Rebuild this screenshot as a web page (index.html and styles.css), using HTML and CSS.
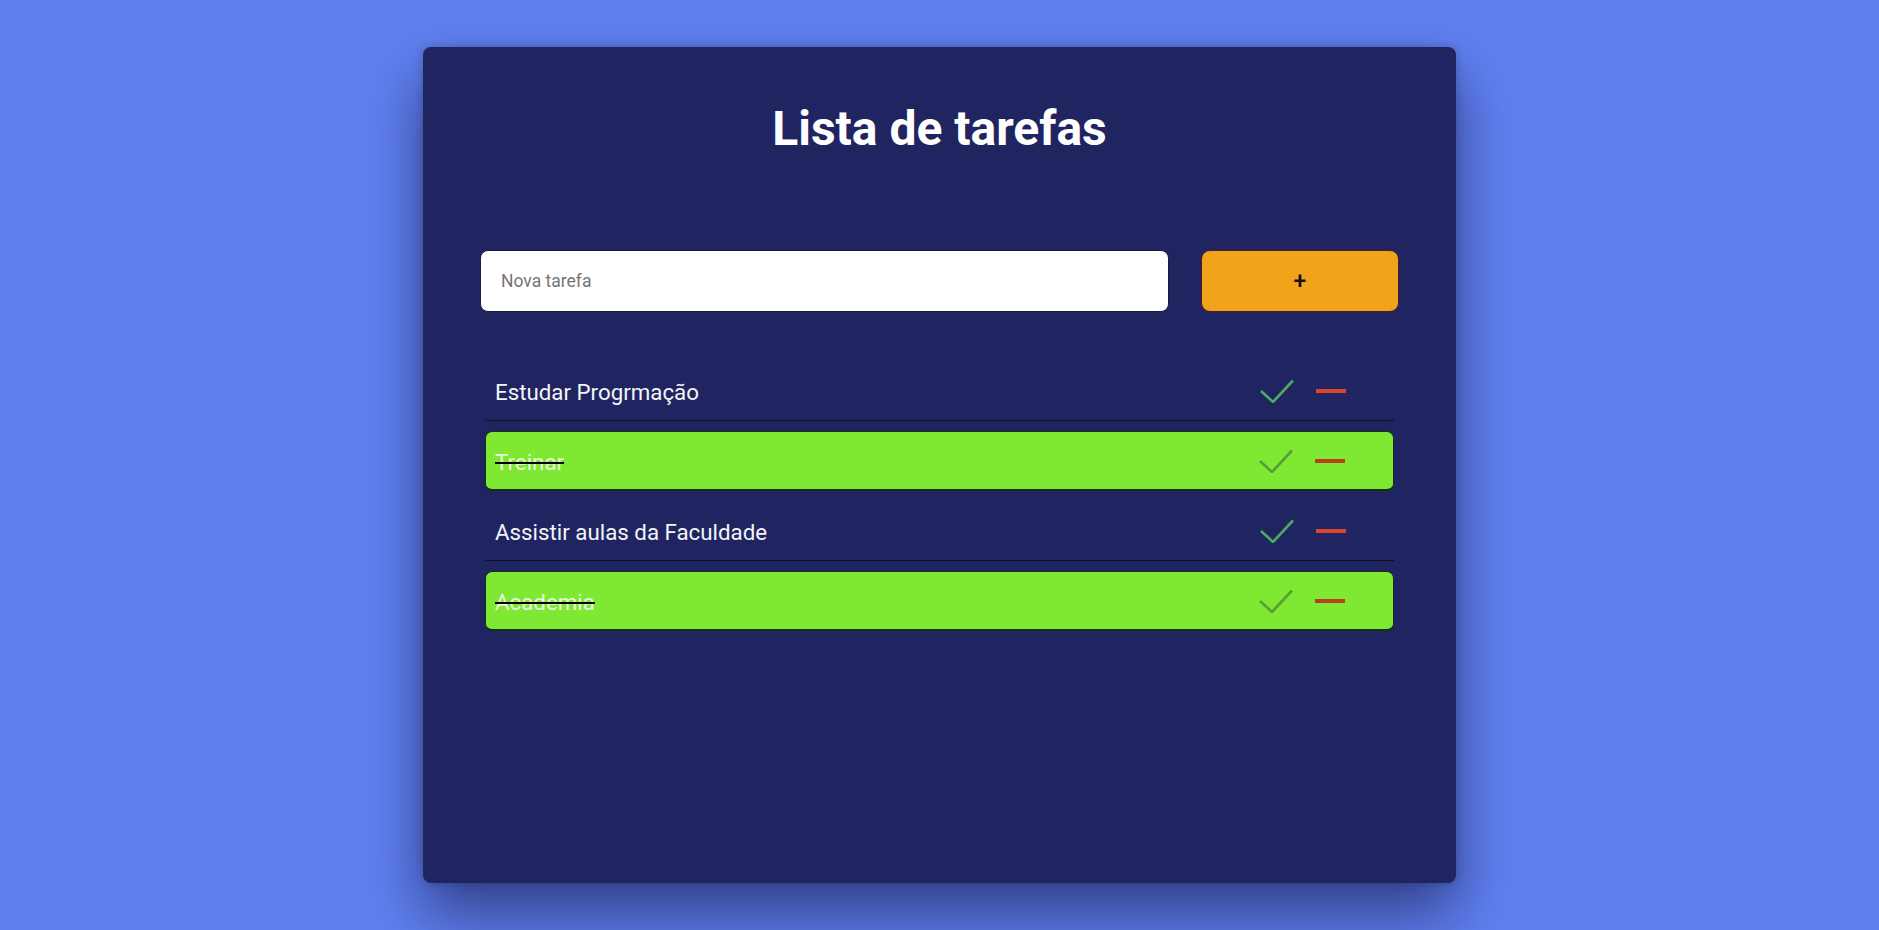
FILE: index.html
```html
<!DOCTYPE html>
<html lang="pt-BR">
<head>
<meta charset="utf-8">
<title>Lista de tarefas</title>
<link rel="stylesheet" href="styles.css">
</head>
<body>
<main class="card">
  <h1 class="title">Lista de tarefas</h1>
  <form class="new-task">
    <input class="task-input" type="text" placeholder="Nova tarefa">
    <button class="add-btn" type="button">+</button>
  </form>
  <ul class="task-list">
    <li class="task">
      <span class="task-text">Estudar Progrmação</span>
      <div class="task-actions">
        <button class="icon-btn check" type="button"><svg width="34" height="24" viewBox="0 0 34 24"><polyline points="1,12 13,23 33,1.5" fill="none" stroke="currentColor" stroke-width="2.6"/></svg></button>
        <button class="icon-btn minus" type="button"><svg width="30" height="4" viewBox="0 0 30 4"><rect x="0" y="0" width="30" height="4" fill="currentColor"/></svg></button>
      </div>
    </li>
    <li class="task done">
      <span class="task-text">Treinar</span>
      <div class="task-actions">
        <button class="icon-btn check" type="button"><svg width="34" height="24" viewBox="0 0 34 24"><polyline points="1,12 13,23 33,1.5" fill="none" stroke="currentColor" stroke-width="2.6"/></svg></button>
        <button class="icon-btn minus" type="button"><svg width="30" height="4" viewBox="0 0 30 4"><rect x="0" y="0" width="30" height="4" fill="currentColor"/></svg></button>
      </div>
    </li>
    <li class="task">
      <span class="task-text">Assistir aulas da Faculdade</span>
      <div class="task-actions">
        <button class="icon-btn check" type="button"><svg width="34" height="24" viewBox="0 0 34 24"><polyline points="1,12 13,23 33,1.5" fill="none" stroke="currentColor" stroke-width="2.6"/></svg></button>
        <button class="icon-btn minus" type="button"><svg width="30" height="4" viewBox="0 0 30 4"><rect x="0" y="0" width="30" height="4" fill="currentColor"/></svg></button>
      </div>
    </li>
    <li class="task done">
      <span class="task-text">Academia</span>
      <div class="task-actions">
        <button class="icon-btn check" type="button"><svg width="34" height="24" viewBox="0 0 34 24"><polyline points="1,12 13,23 33,1.5" fill="none" stroke="currentColor" stroke-width="2.6"/></svg></button>
        <button class="icon-btn minus" type="button"><svg width="30" height="4" viewBox="0 0 30 4"><rect x="0" y="0" width="30" height="4" fill="currentColor"/></svg></button>
      </div>
    </li>
  </ul>
</main>
</body>
</html>
```
FILE: styles.css
```css
* { box-sizing: border-box; }

html, body {
  margin: 0;
  padding: 0;
}

body {
  background: #6080f0;
  font-family: Roboto, "Noto Sans", Arial, sans-serif;
  height: 930px;
  overflow: hidden;
  padding-top: 47px;
}

.card {
  width: 1033px;
  height: 836px;
  margin: 0 auto;
  background: #202562;
  border-radius: 8px;
  box-shadow: 0 30px 60px rgba(10, 10, 50, 0.55), 0 0 8px rgba(0, 0, 0, 0.2);
  padding: 54px 58px 0;
  display: flex;
  flex-direction: column;
}

.title {
  margin: 0;
  text-align: center;
  color: #ffffff;
  font-size: 48px;
  font-weight: 700;
  line-height: 56px;
}

.new-task {
  margin: 93px -1px 0;
  display: flex;
  gap: 32px;
  height: 62px;
}

.task-input {
  flex: 1;
  height: 62px;
  border: 1px solid #1a1a40;
  border-radius: 8px;
  background: #ffffff;
  padding: 0 20px;
  font-family: Roboto, "Noto Sans", Arial, sans-serif;
  font-size: 17.5px;
  color: #333;
  outline: none;
}

.task-input::placeholder {
  color: #757575;
}

.add-btn {
  width: 198px;
  height: 62px;
  background: #f1a31b;
  border: 1px solid #4a1c30;
  border-radius: 9px;
  font-family: Roboto, "Noto Sans", Arial, sans-serif;
  font-size: 23px;
  font-weight: 500;
  color: #111;
  padding: 0;
}

.task-list {
  list-style: none;
  margin: 49px 4px 0;
  padding: 0;
  display: flex;
  flex-direction: column;
  gap: 10px;
}

.task {
  height: 60px;
  display: flex;
  align-items: center;
  padding: 0 48px 0 10px;
  border-bottom: 1.5px solid #0d0f2a;
  color: #f4f4f8;
}

.task.done {
  background: #7ee832;
  border: 1px solid #14301a;
  border-bottom-width: 2px;
  border-radius: 7px;
  padding-left: 9px;
}

.task-text {
  flex: 1;
  font-size: 22.3px;
  line-height: 26px;
  padding-top: 2px;
}

.task.done .task-text {
  color: rgba(255, 255, 255, 0.85);
  text-decoration: line-through;
  text-decoration-color: #000;
  text-decoration-thickness: 2px;
}

.task-actions {
  display: flex;
  align-items: center;
  gap: 22px;
}

.icon-btn {
  background: none;
  border: none;
  padding: 0;
  display: flex;
  align-items: center;
}

.icon-btn.check { color: #4caa5c; }
.icon-btn.minus { color: #d8452a; }

.task.done .icon-btn.check { color: #5a9c3c; }
.task.done .icon-btn.minus { color: #b8401c; }
```
